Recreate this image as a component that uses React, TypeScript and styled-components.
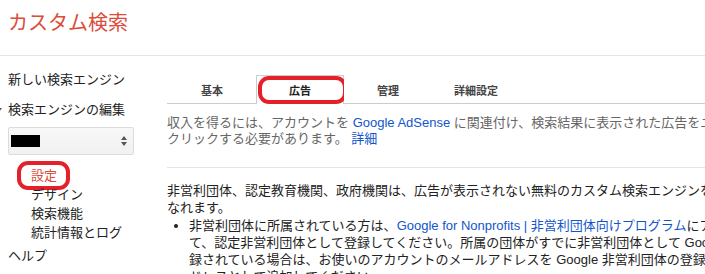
import React from 'react';
import styled, { createGlobalStyle } from 'styled-components';

const fontFamily = '"Liberation Sans", Arial, "Noto Sans CJK JP", sans-serif';
const red = '#dd4b39';
const ring = '#e4202a';
const link = '#1155cc';

const GlobalStyle = createGlobalStyle`
  html, body {
    margin: 0;
    padding: 0;
    background: #fff;
    overflow: hidden;
  }
  body {
    font-family: ${fontFamily};
    font-size: 13px;
    color: #222;
  }
`;

const Page = styled.div`
  width: 705px;
  height: 274px;
  overflow: hidden;
`;

const Header = styled.header`
  height: 56px;
  border-bottom: 1px solid #e5e5e5;
  box-sizing: border-box;
  padding: 11px 0 0 8px;
`;

const Title = styled.h1`
  margin: 0;
  font-size: 20px;
  line-height: 24px;
  font-weight: normal;
  color: ${red};
`;

const Body = styled.div`
  display: flex;
  align-items: flex-start;
`;

const Sidebar = styled.nav`
  flex: 0 0 159px;
  padding: 15px 0 0 8px;
`;

const NavItem = styled.div<{ expanded?: boolean }>`
  position: relative;
  line-height: 17px;
  margin-bottom: 13px;
  white-space: nowrap;

  ${({ expanded }) =>
    expanded &&
    `
    margin-bottom: 9px;
    &::before {
      content: '';
      position: absolute;
      left: -12px;
      top: 7px;
      border-left: 3px solid transparent;
      border-right: 3px solid transparent;
      border-top: 4px solid #555;
    }
  `}
`;

const Select = styled.div`
  width: 126px;
  height: 28px;
  box-sizing: border-box;
  border: 1px solid #dcdcdc;
  border-radius: 2px;
  background: linear-gradient(#f8f8f8, #f1f1f1);
  display: flex;
  align-items: center;
  justify-content: space-between;
  padding: 0 6px 0 2px;
`;

const Redacted = styled.span`
  width: 29px;
  height: 12px;
  background: #000;
`;

const Spinner = styled.span`
  display: flex;
  flex-direction: column;
  gap: 2px;
`;

const Arrow = styled.span<{ dir: 'up' | 'down' }>`
  width: 0;
  height: 0;
  border-left: 3px solid transparent;
  border-right: 3px solid transparent;
  ${({ dir }) =>
    dir === 'up' ? 'border-bottom: 4px solid #555;' : 'border-top: 4px solid #555;'}
`;

const SubList = styled.ul`
  list-style: none;
  margin: 11px 0 5px;
  padding: 0 0 0 23px;
`;

const SubItem = styled.li<{ current?: boolean }>`
  line-height: 19px;
  white-space: nowrap;
  color: ${({ current }) => (current ? red : '#222')};

  span {
    position: relative;
  }

  ${({ current }) =>
    current &&
    `
    span::after {
      content: '';
      position: absolute;
      left: -14px;
      top: -7px;
      width: 53px;
      height: 29px;
      box-sizing: border-box;
      border: 4px solid ${ring};
      border-radius: 11px;
    }
  `}
`;

const Main = styled.main`
  flex: 0 0 600px;
  padding-top: 19px;
`;

const Tabs = styled.div`
  display: flex;
  border-bottom: 1px solid #ccc;
  padding-left: 1px;
`;

const Tab = styled.div<{ active?: boolean }>`
  position: relative;
  width: 88px;
  height: 28px;
  box-sizing: border-box;
  display: flex;
  align-items: center;
  justify-content: center;
  font-size: 11px;
  font-weight: bold;
  color: #444;
  border: 1px solid ${({ active }) => (active ? '#ccc' : 'transparent')};
  border-bottom: none;
  background: #fff;
  margin-bottom: ${({ active }) => (active ? '-1px' : '0')};
  height: ${({ active }) => (active ? '29px' : '28px')};
  color: ${({ active }) => (active ? '#222' : '#444')};

  ${({ active }) =>
    active &&
    `
    &::after {
      content: '';
      position: absolute;
      left: 1px;
      top: 0;
      width: 89px;
      height: 28px;
      box-sizing: border-box;
      border: 4px solid ${ring};
      border-radius: 11px;
    }
  `}
`;

const Intro = styled.p`
  margin: 11px 0 0;
  line-height: 16px;
  color: #666;
`;

const Link = styled.a`
  color: ${link};
  text-decoration: none;
`;

const Divider = styled.hr`
  margin: 20px 0 0;
  border: none;
  border-top: 1px solid #e5e5e5;
`;

const Paragraph = styled.p`
  margin: 14px 0 1px;
  line-height: 17px;
`;

const BulletList = styled.ul`
  margin: 0;
  padding-left: 22px;
  line-height: 17px;
`;

const tabs = ['基本', '広告', '管理', '詳細設定'];
const subItems = ['設定', 'デザイン', '検索機能', '統計情報とログ'];

export default function App() {
  return (
    <Page>
      <GlobalStyle />
      <Header>
        <Title>カスタム検索</Title>
      </Header>
      <Body>
        <Sidebar>
          <NavItem>新しい検索エンジン</NavItem>
          <NavItem expanded>検索エンジンの編集</NavItem>
          <Select>
            <Redacted />
            <Spinner>
              <Arrow dir="up" />
              <Arrow dir="down" />
            </Spinner>
          </Select>
          <SubList>
            {subItems.map((item, i) => (
              <SubItem key={item} current={i === 0}>
                <span>{item}</span>
              </SubItem>
            ))}
          </SubList>
          <NavItem>ヘルプ</NavItem>
        </Sidebar>
        <Main>
          <Tabs>
            {tabs.map((t, i) => (
              <Tab key={t} active={i === 1}>
                {t}
              </Tab>
            ))}
          </Tabs>
          <Intro>
            収入を得るには、アカウントを <Link>Google AdSense</Link>{' '}
            に関連付け、検索結果に表示された広告をユーザーが
            クリックする必要があります。 <Link>詳細</Link>
          </Intro>
          <Divider />
          <Paragraph>
            非営利団体、認定教育機関、政府機関は、広告が表示されない無料のカスタム検索エンジンをご利用になれます。
          </Paragraph>
          <BulletList>
            <li>
              非営利団体に所属されている方は、
              <Link>Google for Nonprofits | 非営利団体向けプログラム</Link>
              にアクセスして、認定非営利団体として登録してください。所属の団体がすでに非営利団体として
              Google に登録されている場合は、お使いのアカウントのメールアドレスを Google
              非営利団体の登録メールアドレスとして追加してください。
            </li>
          </BulletList>
        </Main>
      </Body>
    </Page>
  );
}
